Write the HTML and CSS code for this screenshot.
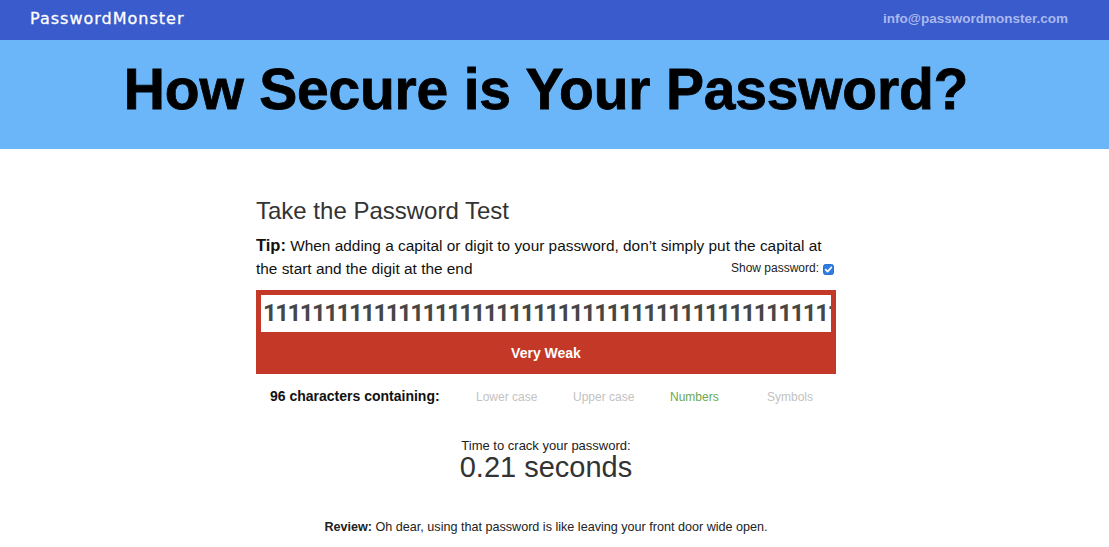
FILE: index.html
```html
<!DOCTYPE html>
<html>
<head>
<meta charset="utf-8">
<link rel="stylesheet" href="styles.css">
</head>
<body>
<header class="topbar">
  <div class="brand">PasswordMonster</div>
  <div class="email">info@passwordmonster.com</div>
</header>
<section class="hero">
  <h1>How Secure is Your Password?</h1>
</section>
<div class="page">
<main class="content">
  <h2 class="test-title">Take the Password Test</h2>
  <p class="tip"><b>Tip:</b> When adding a capital or digit to your password, don’t simply put the capital at the start and the digit at the end<label class="show"><span>Show password:</span><span class="check"><svg width="11" height="11" viewBox="0 0 11 11"><rect x="0.5" y="0.5" width="10" height="10" rx="2" fill="#2f7de1" stroke="#2a6fd0"/><path d="M2.6 5.6 L4.6 7.6 L8.4 3.4" fill="none" stroke="#fff" stroke-width="1.6" stroke-linecap="round" stroke-linejoin="round"/></svg></span></label></p>
  <div class="meter">
    <div class="pw-input">11111111111111111111111111111111111111111111111</div>
    <div class="strength">Very Weak</div>
  </div>
  <div class="contains">
    <span class="count">96 characters containing:</span>
    <span class="cat">Lower case</span>
    <span class="cat">Upper case</span>
    <span class="cat on">Numbers</span>
    <span class="cat last">Symbols</span>
  </div>
  <div class="crack">
    <div class="crack-label">Time to crack your password:</div>
    <div class="crack-time">0.21 seconds</div>
  </div>
  <p class="review"><b>Review:</b> Oh dear, using that password is like leaving your front door wide open.</p>
</main>
</div>
</body>
</html>
```
FILE: styles.css
```css
* { box-sizing: border-box; }
html, body { margin: 0; padding: 0; background: #fff; }
body { font-family: "Liberation Sans", Arial, sans-serif; color: #222; }

.topbar {
  height: 40px;
  background: #3a5bcc;
  display: flex;
  align-items: center;
  justify-content: space-between;
  padding: 0 41px 0 30px;
}
.brand {
  color: #fff;
  font-family: "DejaVu Sans", sans-serif;
  font-size: 16px;
  letter-spacing: 1px;
  margin-top: -4px;
  -webkit-text-stroke: 0.3px #fff;
}
.email {
  color: #a9b9ee;
  font-size: 13.5px;
  font-weight: bold;
  margin-top: -4px;
}

.hero {
  height: 109px;
  background: #6bb6f9;
  display: flex;
  justify-content: center;
  padding: 17px 17px 0 0;
}
.hero h1 {
  margin: 0;
  font-size: 57px;
  line-height: 64px;
  font-weight: bold;
  color: #000;
  letter-spacing: -0.2px;
  -webkit-text-stroke: 0.8px #000;
}

.page {
  display: flex;
  justify-content: center;
  padding-right: 17px;
}
.content {
  width: 580px;
  padding-top: 46px;
}
.test-title {
  margin: 0;
  font-weight: normal;
  font-size: 24px;
  line-height: 32px;
  color: #333;
}
.tip {
  margin: 7px 0 0;
  font-size: 15.4px;
  line-height: 23px;
  color: #111;
}
.tip b { font-size: 16.5px; }
.show {
  float: right;
  font-size: 12px;
  line-height: 23px;
  color: #222;
  display: flex;
  align-items: center;
  gap: 4px;
  margin-right: 2px;
}
.check { display: inline-flex; margin-top: 1px; }

.meter {
  margin-top: 10px;
  background: #c43827;
  padding: 5px 5px 0;
  height: 84px;
}
.pw-input {
  background: #fff;
  height: 37px;
  overflow: hidden;
  white-space: nowrap;
  font-family: Roboto, "Liberation Sans", sans-serif;
  font-weight: bold;
  font-size: 24px;
  line-height: 37px;
  color: #464646;
  padding-left: 2px;
  letter-spacing: -1.5px;
}
.strength {
  text-align: center;
  color: #fff;
  font-weight: bold;
  font-size: 14px;
  line-height: 42px;
}

.contains {
  display: flex;
  align-items: center;
  height: 44px;
  padding-left: 14px;
}
.count {
  flex: 0 0 206px;
  font-weight: bold;
  font-size: 14px;
  color: #111;
}
.cat {
  flex: 0 0 97px;
  font-size: 12px;
  color: #c2c2c2;
  padding-top: 2px;
}
.cat.last { flex: 0 0 auto; }
.cat.on { color: #6aa84f; }

.crack {
  text-align: center;
  margin-top: 20px;
}
.crack-label {
  font-size: 13px;
  line-height: 16px;
  color: #222;
}
.crack-time {
  font-size: 29px;
  line-height: 27px;
  color: #333;
}
.review {
  text-align: center;
  font-size: 12.6px;
  margin: 39px 0 0;
  color: #222;
}
```
